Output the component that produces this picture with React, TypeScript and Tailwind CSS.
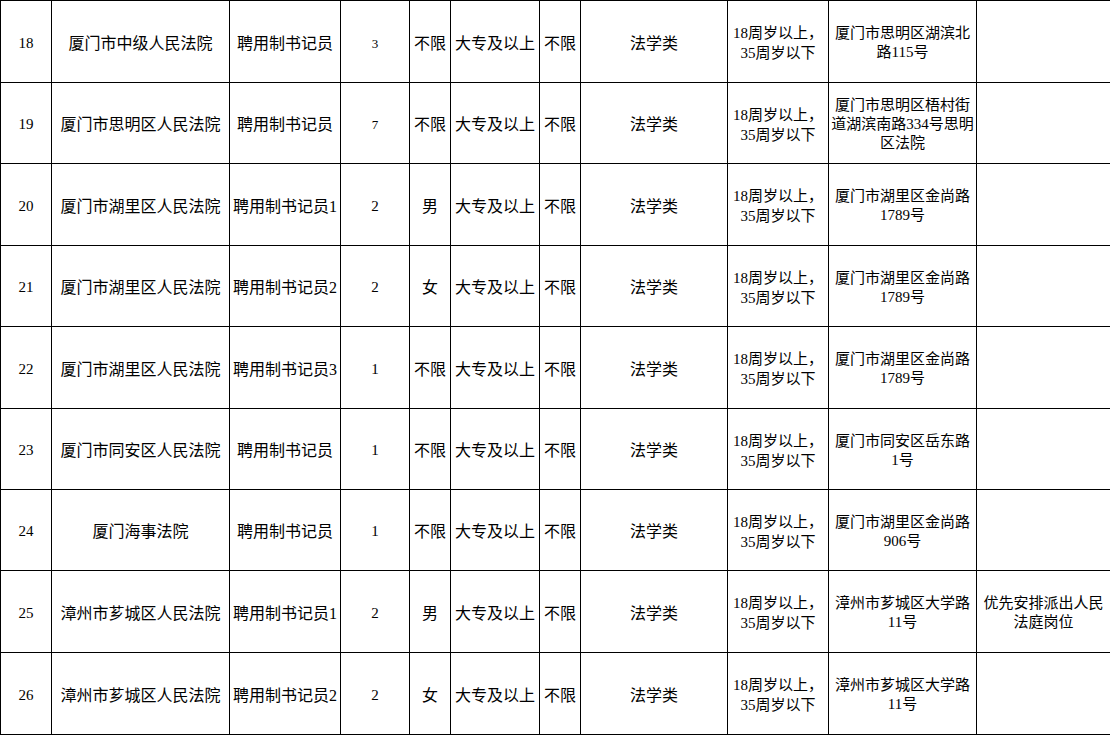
import React from "react";

type Row = {
  no: string;
  court: string;
  post: string;
  count: string;
  countSmall?: boolean;
  sex: string;
  addr: string[];
  note?: string[];
  h: string;
};

const rows: Row[] = [
  { no: "18", court: "厦门市中级人民法院", post: "聘用制书记员", count: "3", countSmall: true, sex: "不限", addr: ["厦门市思明区湖滨北", "路115号"], h: "h-[82px]" },
  { no: "19", court: "厦门市思明区人民法院", post: "聘用制书记员", count: "7", countSmall: true, sex: "不限", addr: ["厦门市思明区梧村街", "道湖滨南路334号思明", "区法院"], h: "h-[81px]" },
  { no: "20", court: "厦门市湖里区人民法院", post: "聘用制书记员1", count: "2", sex: "男", addr: ["厦门市湖里区金尚路", "1789号"], h: "h-[82px]" },
  { no: "21", court: "厦门市湖里区人民法院", post: "聘用制书记员2", count: "2", sex: "女", addr: ["厦门市湖里区金尚路", "1789号"], h: "h-[81px]" },
  { no: "22", court: "厦门市湖里区人民法院", post: "聘用制书记员3", count: "1", sex: "不限", addr: ["厦门市湖里区金尚路", "1789号"], h: "h-[82px]" },
  { no: "23", court: "厦门市同安区人民法院", post: "聘用制书记员", count: "1", sex: "不限", addr: ["厦门市同安区岳东路", "1号"], h: "h-[81px]" },
  { no: "24", court: "厦门海事法院", post: "聘用制书记员", count: "1", sex: "不限", addr: ["厦门市湖里区金尚路", "906号"], h: "h-[81px]" },
  { no: "25", court: "漳州市芗城区人民法院", post: "聘用制书记员1", count: "2", sex: "男", addr: ["漳州市芗城区大学路", "11号"], note: ["优先安排派出人民", "法庭岗位"], h: "h-[82px]" },
  { no: "26", court: "漳州市芗城区人民法院", post: "聘用制书记员2", count: "2", sex: "女", addr: ["漳州市芗城区大学路", "11号"], h: "h-[82px]" },
];

const td = "border border-black text-center align-middle px-0 pt-[3px] pb-0 overflow-hidden whitespace-nowrap";

function Lines({ lines }: { lines: string[] }) {
  return (
    <>
      {lines.map((l, i) => (
        <div key={i}>{l}</div>
      ))}
    </>
  );
}

export default function App() {
  return (
    <div className="w-[1110px] h-[736px] bg-white overflow-hidden">
      <table
        className="table-fixed border-collapse w-[1110px] text-black text-[16px] leading-[19px]"
        style={{ fontFamily: '"Liberation Serif", "Noto Sans CJK SC", serif' }}
      >
        <colgroup>
          <col className="w-[51px]" />
          <col className="w-[178px]" />
          <col className="w-[111px]" />
          <col className="w-[69px]" />
          <col className="w-[41px]" />
          <col className="w-[89px]" />
          <col className="w-[41px]" />
          <col className="w-[147px]" />
          <col className="w-[101px]" />
          <col className="w-[148px]" />
          <col className="w-[134px]" />
        </colgroup>
        <tbody>
          {rows.map((r) => (
            <tr key={r.no} className={r.h}>
              <td className={`${td} text-[15px]`}>{r.no}</td>
              <td className={td}>{r.court}</td>
              <td className={td}>{r.post}</td>
              <td className={`${td} ${r.countSmall ? "text-[13px]" : "text-[15px]"}`}>{r.count}</td>
              <td className={td}>{r.sex}</td>
              <td className={td}>大专及以上</td>
              <td className={td}>不限</td>
              <td className={td}>法学类</td>
              <td className={`${td} text-[15px] leading-[20px]`}>
                <div>18周岁以上，</div>
                <div>35周岁以下</div>
              </td>
              <td className={`${td} text-[15px] leading-[19px]`}>
                <Lines lines={r.addr} />
              </td>
              <td className={`${td} text-[15px] leading-[19px]`}>{r.note ? <Lines lines={r.note} /> : null}</td>
            </tr>
          ))}
        </tbody>
      </table>
    </div>
  );
}
